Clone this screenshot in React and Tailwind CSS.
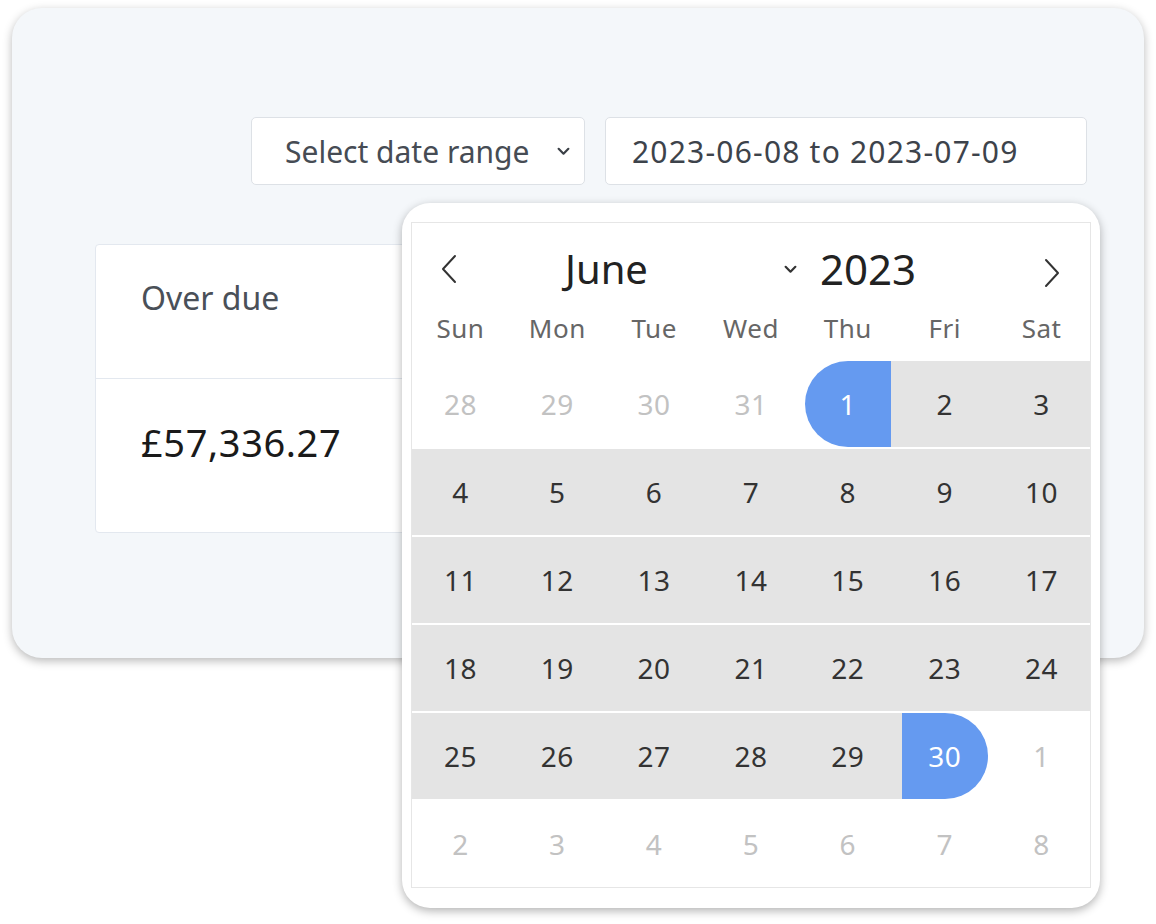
import React from "react";

const font = { fontFamily: "'Noto Sans', Lato, sans-serif" };

const weekdays = ["Sun", "Mon", "Tue", "Wed", "Thu", "Fri", "Sat"];

// each day: [label, muted, kind]  kind: "start" | "end" | "range" | undefined
const weeks = [
  [["28", 1], ["29", 1], ["30", 1], ["31", 1], ["1", 0, "start"], ["2", 0, "range"], ["3", 0, "range"]],
  [["4", 0, "range"], ["5", 0, "range"], ["6", 0, "range"], ["7", 0, "range"], ["8", 0, "range"], ["9", 0, "range"], ["10", 0, "range"]],
  [["11", 0, "range"], ["12", 0, "range"], ["13", 0, "range"], ["14", 0, "range"], ["15", 0, "range"], ["16", 0, "range"], ["17", 0, "range"]],
  [["18", 0, "range"], ["19", 0, "range"], ["20", 0, "range"], ["21", 0, "range"], ["22", 0, "range"], ["23", 0, "range"], ["24", 0, "range"]],
  [["25", 0, "range"], ["26", 0, "range"], ["27", 0, "range"], ["28", 0, "range"], ["29", 0, "range"], ["30", 0, "end"], ["1", 1]],
  [["2", 1], ["3", 1], ["4", 1], ["5", 1], ["6", 1], ["7", 1], ["8", 1]],
];

function DayCell({ label, muted, kind }) {
  let cellBg = "";
  if (kind === "range") cellBg = "bg-[#e4e4e4]";
  if (kind === "start") cellBg = "bg-[linear-gradient(to_right,transparent_50%,#e4e4e4_50%)]";
  if (kind === "end") cellBg = "bg-[linear-gradient(to_right,#e4e4e4_50%,transparent_50%)]";

  let dayCls = "text-[#333]";
  if (muted) dayCls = "text-[#c2c2c2]";
  if (kind === "start") dayCls = "bg-[#659af0] text-white rounded-l-[43px]";
  if (kind === "end") dayCls = "bg-[#659af0] text-white rounded-r-[43px]";

  return (
    <div className={`flex h-[86px] justify-center ${cellBg}`}>
      <div className={`flex h-[86px] w-[86px] items-center justify-center text-[28px] tracking-[0.5px] ${dayCls}`}>
        {label}
      </div>
    </div>
  );
}

function Chevron({ className }) {
  return (
    <svg viewBox="0 0 12 8" className={className} fill="none" stroke="currentColor" strokeWidth="2" strokeLinecap="round" strokeLinejoin="round">
      <path d="M1.5 1.5 6 6l4.5-4.5" />
    </svg>
  );
}

function Calendar() {
  return (
    <div className="absolute left-[402px] top-[203px] w-[698px] rounded-[28px] bg-white px-[9px] pt-[19px] pb-[20px] shadow-[0_3px_10px_rgba(0,0,0,0.3)]">
      <div className="border border-[#e6e6e6] bg-white">
        <div className="flex h-[91px] items-center">
          <svg viewBox="0 0 16 30" className="ml-[29px] h-[30px] w-[16px] text-[#333]" fill="none" stroke="currentColor" strokeWidth="2" strokeLinecap="round" strokeLinejoin="round">
            <path d="M14 2 2 15l12 13" />
          </svg>
          <div className="ml-[108px] flex w-[232px] items-center justify-between">
            <span className="text-[40px] leading-none text-[#222]">June</span>
            <Chevron className="mt-[2px] h-[9px] w-[13px] text-[#333]" />
          </div>
          <span className="ml-[23px] text-[42px] leading-none text-[#222]">2023</span>
          <svg viewBox="0 0 16 30" className="ml-auto mr-[30px] mt-[8px] h-[30px] w-[16px] text-[#333]" fill="none" stroke="currentColor" strokeWidth="2" strokeLinecap="round" strokeLinejoin="round">
            <path d="M2 2l12 13L2 28" />
          </svg>
        </div>
        <div className="grid h-[28px] grid-cols-7 items-center text-[26px] tracking-[0.5px] text-[#666]">
          {weekdays.map((d) => (
            <div key={d} className="text-center leading-none">{d}</div>
          ))}
        </div>
        <div className="mt-[19px] flex flex-col gap-[2px]">
          {weeks.map((week, i) => (
            <div key={i} className="grid grid-cols-7">
              {week.map(([label, muted, kind], j) => (
                <DayCell key={j} label={label} muted={muted} kind={kind} />
              ))}
            </div>
          ))}
        </div>
      </div>
    </div>
  );
}

export default function App() {
  return (
    <div className="relative h-[924px] w-[1156px] overflow-hidden bg-white pt-[8px] pl-[12px]" style={font}>
      <div className="h-[650px] w-[1132px] rounded-[30px] bg-[#f4f7fa] shadow-[0_3px_10px_rgba(0,0,0,0.28)]">
        <div className="flex justify-end gap-[20px] pt-[109px] pr-[57px]">
          <div className="flex h-[68px] w-[334px] items-center justify-between rounded-[5px] border border-[#dde1e6] bg-white pl-[33px] pr-[14px]">
            <span className="text-[30px] text-[#464c54]">Select date range</span>
            <Chevron className="h-[9px] w-[13px] text-[#3a3f46]" />
          </div>
          <div className="flex h-[68px] w-[482px] items-center rounded-[5px] border border-[#dde1e6] bg-white pl-[26px]">
            <span className="text-[30px] tracking-[1.2px] text-[#3d434b]">2023-06-08 to 2023-07-09</span>
          </div>
        </div>
        <div className="ml-[83px] mt-[59px] w-[520px] rounded-[4px] border border-[#e3e8ef] bg-white">
          <div className="flex h-[134px] items-center border-b border-[#e3e8ef] pl-[45px] pb-[28px]">
            <span className="text-[32px] text-[#4a5058]">Over due</span>
          </div>
          <div className="flex h-[153px] items-center pl-[45px] pb-[26px]">
            <span className="text-[38px] tracking-[0.6px] text-[#1a1a1a]">£57,336.27</span>
          </div>
        </div>
      </div>
      <Calendar />
    </div>
  );
}
